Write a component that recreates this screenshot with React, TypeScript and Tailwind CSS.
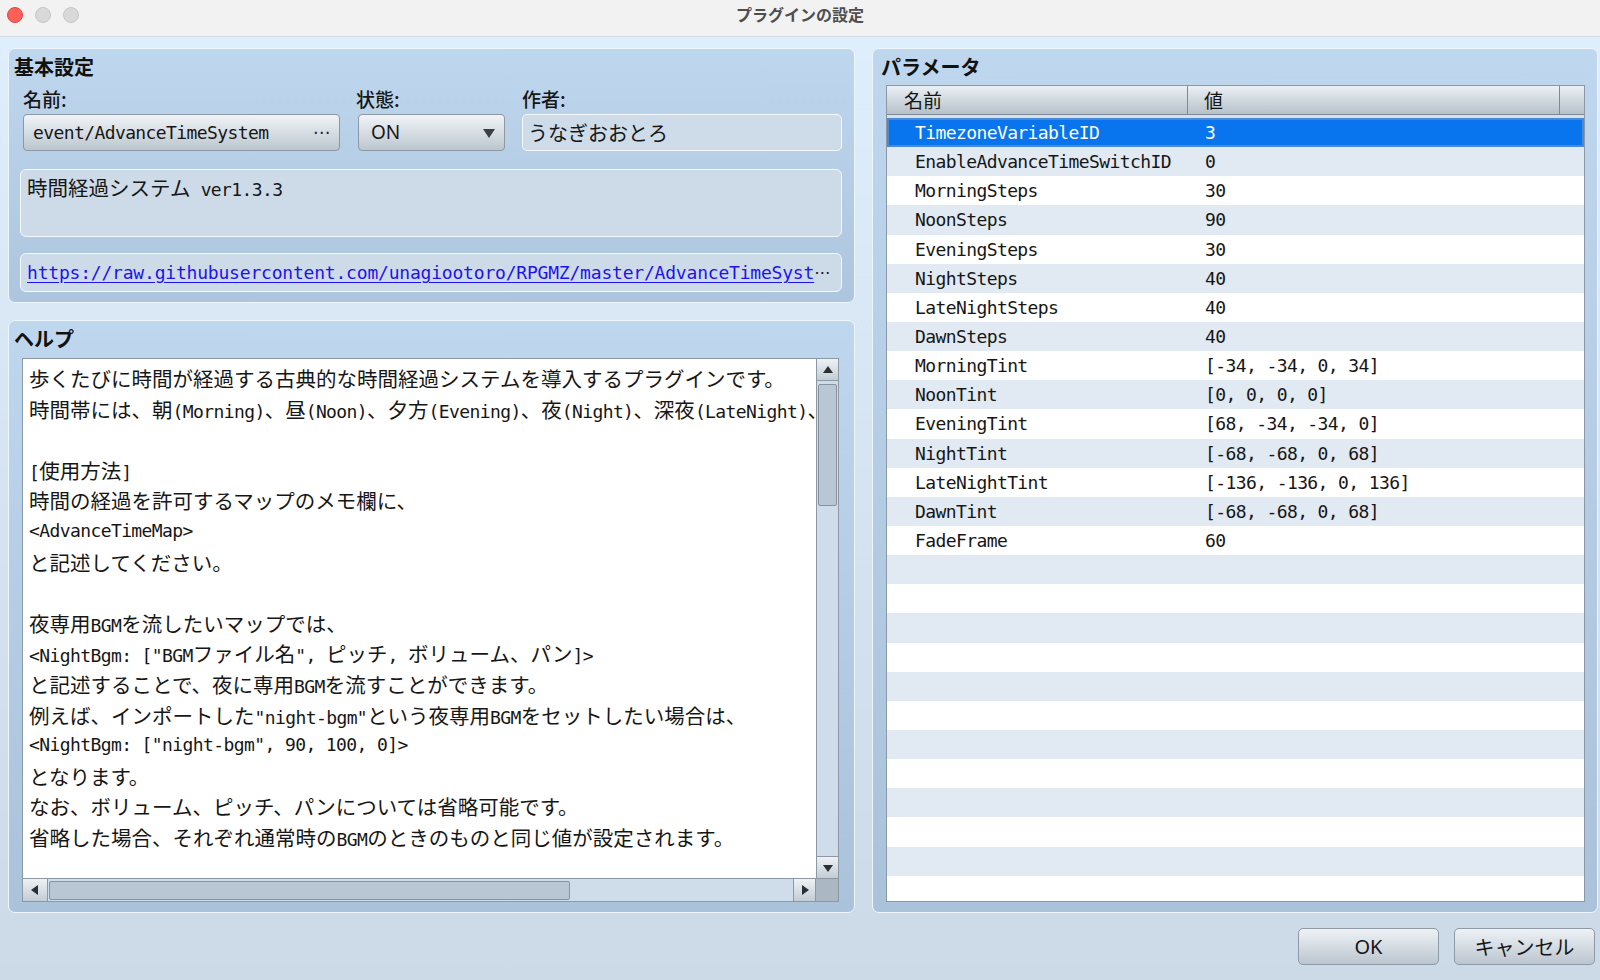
import React from 'react';

const MONO = "font-['DejaVu_Sans_Mono','Noto_Sans_CJK_JP',monospace] text-[18px] tracking-[-0.6px]";
const CJK = "font-['Noto_Sans_CJK_JP',sans-serif]";
const UI = "font-['Noto_Sans','Noto_Sans_CJK_JP',sans-serif]";

const HELP_LINES = [
  '歩くたびに時間が経過する古典的な時間経過システムを導入するプラグインです。',
  '時間帯には、朝(Morning)、昼(Noon)、夕方(Evening)、夜(Night)、深夜(LateNight)、',
  '',
  '[使用方法]',
  '時間の経過を許可するマップのメモ欄に、',
  '<AdvanceTimeMap>',
  'と記述してください。',
  '',
  '夜専用BGMを流したいマップでは、',
  '<NightBgm: ["BGMファイル名", ピッチ, ボリューム、パン]>',
  'と記述することで、夜に専用BGMを流すことができます。',
  '例えば、インポートした"night-bgm"という夜専用BGMをセットしたい場合は、',
  '<NightBgm: ["night-bgm", 90, 100, 0]>',
  'となります。',
  'なお、ボリューム、ピッチ、パンについては省略可能です。',
  '省略した場合、それぞれ通常時のBGMのときのものと同じ値が設定されます。',
];

const PARAMS: [string, string][] = [
  ['TimezoneVariableID', '3'],
  ['EnableAdvanceTimeSwitchID', '0'],
  ['MorningSteps', '30'],
  ['NoonSteps', '90'],
  ['EveningSteps', '30'],
  ['NightSteps', '40'],
  ['LateNightSteps', '40'],
  ['DawnSteps', '40'],
  ['MorningTint', '[-34, -34, 0, 34]'],
  ['NoonTint', '[0, 0, 0, 0]'],
  ['EveningTint', '[68, -34, -34, 0]'],
  ['NightTint', '[-68, -68, 0, 68]'],
  ['LateNightTint', '[-136, -136, 0, 136]'],
  ['DawnTint', '[-68, -68, 0, 68]'],
  ['FadeFrame', '60'],
];

const isWide = (ch: string) => /[\u3000-\u30ff\u3400-\u9fff\uff00-\uffef]/.test(ch);

// full-width glyphs are twice the mono cell, so CJK and latin runs get their own size
const Mixed: React.FC<{ text: string }> = ({ text }) => {
  const runs: { wide: boolean; s: string }[] = [];
  for (const ch of text) {
    const w = isWide(ch);
    const last = runs[runs.length - 1];
    if (last && last.wide === w) last.s += ch;
    else runs.push({ wide: w, s: ch });
  }
  return (
    <>
      {runs.map((r, i) =>
        r.wide ? (
          <span key={i} className="font-['Noto_Sans_CJK_JP',sans-serif] text-[20.5px]">{r.s}</span>
        ) : (
          <span key={i} className="font-['DejaVu_Sans_Mono','Noto_Sans_CJK_JP',monospace] text-[18px] tracking-[-0.6px]">{r.s}</span>
        )
      )}
    </>
  );
};

const Tri: React.FC<{ dir: 'up' | 'down' | 'left' | 'right' }> = ({ dir }) => {
  const pts = {
    up: '1,9 6,2 11,9',
    down: '1,3 11,3 6,10',
    left: '9,1 9,11 2,6',
    right: '3,1 3,11 10,6',
  }[dir];
  return (
    <svg width="12" height="12" viewBox="0 0 12 12">
      <polygon points={pts} fill="#2b2f33" />
    </svg>
  );
};

const Lights = () => (
  <div className="flex items-center gap-[12px] pl-[7px]">
    <span className="w-[16px] h-[16px] rounded-full bg-[#fe5f57] border border-[#e1453f]" />
    <span className="w-[16px] h-[16px] rounded-full bg-[#d9d9d9] border border-[#c6c6c6]" />
    <span className="w-[16px] h-[16px] rounded-full bg-[#d9d9d9] border border-[#c6c6c6]" />
  </div>
);

export default function App() {
  const rows = Array.from({ length: 27 }, (_, i) => PARAMS[i] ?? null);

  return (
    <div className={`w-[1600px] h-[980px] flex flex-col overflow-hidden ${UI}`}>
      {/* title bar */}
      <div className="relative h-[37px] shrink-0 bg-[#f2f2f2] border-b border-[#d3dbe3] flex items-start pt-[7px]">
        <Lights />
        <div className="absolute inset-x-0 top-[3px] text-center text-[16px] font-semibold text-[#4e4e4e]">
          プラグインの設定
        </div>
      </div>

      {/* body */}
      <div className="flex-1 flex flex-col bg-linear-to-b from-[#dfeefc] to-[#ccd9e6] pt-[11px] pb-[15px] pl-[8px] pr-[2px]">
        <div className="h-[865px] flex gap-[17px]">
          {/* left column */}
          <div className="w-[847px] flex flex-col gap-[17px]">
            {/* basic settings */}
            <div className="h-[255px] rounded-[7px] border-[1.5px] border-[#eef6fd] bg-linear-to-b from-[#bfd7ee] to-[#aec6dd] pt-[5px]">
              <div className={`pl-[5px] h-[26px] leading-[26px] text-[20px] font-bold text-[#111] ${CJK}`}>基本設定</div>
              <div className="pl-[13px] pr-[12px]">
                <div className="flex mt-[7px]">
                  <div className="w-[317px] ml-[1px] flex flex-col">
                    <div className={`h-[24px] leading-[24px] text-[19px] font-medium text-[#161616] ${CJK}`}>名前:</div>
                    <div className="mt-[3px] h-[37px] rounded-[4px] border border-[#8b97a2] bg-linear-to-b from-[#f1f4f7] to-[#bcc6cf] flex items-center px-[9px] justify-between">
                      <span className={`text-[#161616] ${MONO}`}>event/AdvanceTimeSystem</span>
                      <span className="text-[17px] text-[#222] font-['DejaVu_Sans',sans-serif]">⋯</span>
                    </div>
                  </div>
                  <div className="w-[147px] ml-[18px] flex flex-col">
                    <div className={`-ml-[2px] h-[24px] leading-[24px] text-[19px] font-medium text-[#161616] ${CJK}`}>状態:</div>
                    <div className="mt-[3px] h-[37px] rounded-[4px] border border-[#8b97a2] bg-linear-to-b from-[#f1f4f7] to-[#bcc6cf] flex items-center pl-[12px] pr-[9px] justify-between">
                      <span className="text-[19px] text-[#161616] font-['Noto_Sans',sans-serif]">ON</span>
                      <svg width="12" height="10" viewBox="0 0 12 10">
                        <polygon points="0,1 12,1 6,10" fill="#3a3f44" />
                      </svg>
                    </div>
                  </div>
                  <div className="w-[320px] ml-[17px] flex flex-col">
                    <div className={`h-[24px] leading-[24px] text-[19px] font-medium text-[#161616] ${CJK}`}>作者:</div>
                    <div className="mt-[3px] h-[37px] rounded-[5px] border-[1.5px] border-[#f4f9fe] bg-[#cedcea] flex items-center px-[5px]">
                      <span className={`text-[20px] text-[#161616] ${CJK}`}>うなぎおおとろ</span>
                    </div>
                  </div>
                </div>
              </div>
              <div className="pl-[11px] pr-[12px]">
                <div className="mt-[18px] h-[68px] rounded-[6px] border-[1.5px] border-[#f4f9fe] bg-[#cddbe8] px-[6px] pt-[2px] leading-[30px] text-[#161616] whitespace-pre">
                  <Mixed text="時間経過システム ver1.3.3" />
                </div>
                <div className="mt-[16px] h-[39px] rounded-[6px] border-[1.5px] border-[#f4f9fe] bg-[#cddbe8] px-[6px] flex items-center whitespace-nowrap overflow-hidden">
                  <span className="font-['DejaVu_Sans_Mono',monospace] text-[18px] tracking-[-0.2px] text-[#1f12f0] underline underline-offset-[3px]">
                    https://raw.githubusercontent.com/unagiootoro/RPGMZ/master/AdvanceTimeSyst
                  </span>
                  <span className="font-['DejaVu_Sans',sans-serif] text-[16px] text-[#161616]">⋯</span>
                </div>
              </div>
            </div>

            {/* help */}
            <div className="flex-1 rounded-[7px] border-[1.5px] border-[#eef6fd] bg-linear-to-b from-[#bfd7ee] to-[#abc3da] pt-[5px] pl-[13px] pr-[15px] pb-[10px] flex flex-col">
              <div className={`-ml-[8px] h-[26px] leading-[26px] text-[20px] font-bold text-[#111] ${CJK}`}>ヘルプ</div>
              <div className="mt-[6px] flex-1 border border-[#8c99a5] flex flex-col overflow-hidden">
                <div className="flex-1 flex min-h-0">
                  <div className="flex-1 bg-white overflow-hidden pl-[6px] pt-[4px] text-[#161616]">
                    {HELP_LINES.map((l, i) => (
                      <div key={i} className="h-[30.6px] leading-[30.6px] whitespace-pre">
                        {l ? <Mixed text={l} /> : '\u00a0'}
                      </div>
                    ))}
                  </div>
                  {/* vertical scrollbar */}
                  <div className="w-[22px] bg-[#cfdce9] border-l border-[#8c99a5] flex flex-col">
                    <div className="h-[22px] bg-linear-to-b from-[#eef2f6] to-[#c3ccd5] border-b border-[#8c99a5] flex items-center justify-center">
                      <Tri dir="up" />
                    </div>
                    <div className="mt-[3px] mx-[1px] h-[122px] bg-[#b9c6d3] border border-[#8794a0] rounded-[2px]" />
                    <div className="flex-1" />
                    <div className="h-[22px] bg-linear-to-b from-[#eef2f6] to-[#c3ccd5] border-t border-[#8c99a5] flex items-center justify-center">
                      <Tri dir="down" />
                    </div>
                  </div>
                </div>
                {/* horizontal scrollbar */}
                <div className="h-[23px] flex border-t border-[#8c99a5] bg-[#cfdce9]">
                  <div className="w-[25px] bg-linear-to-b from-[#eef2f6] to-[#c3ccd5] border-r border-[#8c99a5] flex items-center justify-center">
                    <Tri dir="left" />
                  </div>
                  <div className="flex-1 flex items-center pl-[1px]">
                    <div className="w-[521px] h-[19px] bg-[#b9c6d3] border border-[#8794a0] rounded-[2px]" />
                  </div>
                  <div className="w-[22px] bg-linear-to-b from-[#eef2f6] to-[#c3ccd5] border-l border-[#8c99a5] flex items-center justify-center">
                    <Tri dir="right" />
                  </div>
                  <div className="w-[23px] bg-[#abb8c4] border-l border-[#8c99a5]" />
                </div>
              </div>
            </div>
          </div>

          {/* parameters */}
          <div className="w-[726px] rounded-[7px] border-[1.5px] border-[#eef6fd] bg-linear-to-b from-[#bfd7ee] to-[#abc3da] pt-[5px] pl-[13px] pr-[12px] pb-[10px] flex flex-col">
            <div className={`-ml-[5px] h-[26px] leading-[26px] text-[20px] font-bold text-[#111] ${CJK}`}>パラメータ</div>
            <div className="mt-[5px] flex-1 border border-[#8a98a6] bg-white flex flex-col overflow-hidden">
              <div className={`h-[29px] shrink-0 flex bg-linear-to-b from-[#ebf0f5] to-[#b7c1ca] border-b border-[#7d8a96] text-[19px] text-[#161616] ${CJK}`}>
                <div className="w-[301px] border-r border-[#7d8a96] pl-[17px] leading-[27px]">名前</div>
                <div className="flex-1 border-r border-[#7d8a96] pl-[16px] leading-[27px]">値</div>
                <div className="w-[24px]" />
              </div>
              <div className="pt-[3px] bg-[#d6e0ea]" />
              <div className={MONO}>
                {rows.map((r, i) => {
                  const sel = i === 0;
                  const bg = sel
                    ? 'bg-[#0874ee] text-white shadow-[inset_0_0_0_2px_#4c8ad0]'
                    : i % 2 === 1
                    ? 'bg-[#e1eaf2] text-[#161616]'
                    : 'bg-white text-[#161616]';
                  return (
                    <div key={i} className={`h-[29.15px] flex items-center ${bg}`}>
                      <div className="w-[301px] pl-[28px] whitespace-nowrap">{r ? r[0] : ''}</div>
                      <div className="flex-1 pl-[17px] whitespace-nowrap">{r ? r[1] : ''}</div>
                    </div>
                  );
                })}
              </div>
            </div>
          </div>
        </div>

        {/* buttons */}
        <div className="mt-[15px] h-[37px] flex justify-end gap-[15px] pr-[3px]">
          <button className="w-[141px] h-[37px] rounded-[5px] border border-[#8e9aa5] bg-linear-to-b from-[#eef2f6] to-[#bcc6cf] text-[20px] text-[#161616] font-['Noto_Sans',sans-serif]">
            OK
          </button>
          <button className={`w-[141px] h-[37px] rounded-[5px] border border-[#8e9aa5] bg-linear-to-b from-[#eef2f6] to-[#bcc6cf] text-[20px] text-[#161616] ${CJK}`}>
            キャンセル
          </button>
        </div>
      </div>
    </div>
  );
}
